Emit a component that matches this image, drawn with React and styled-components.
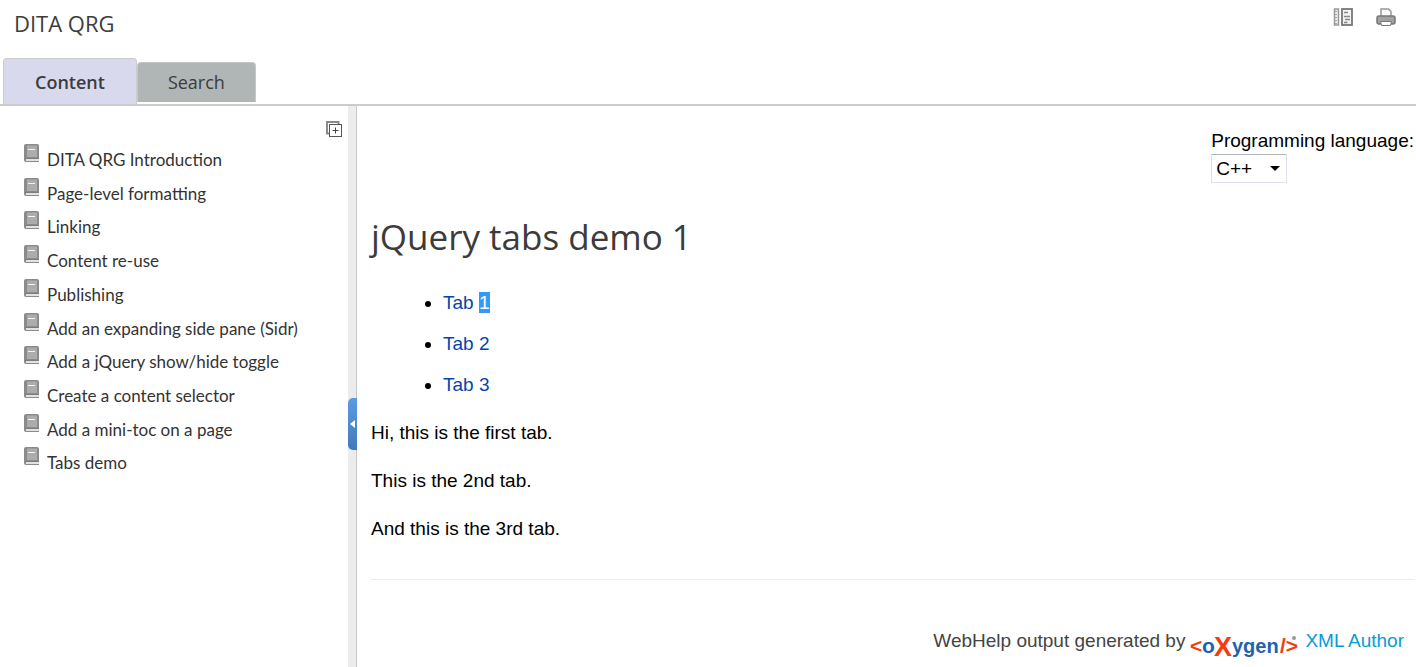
import { useState } from "react";
import styled, { createGlobalStyle, css } from "styled-components";

const topics = [
  "DITA QRG Introduction",
  "Page-level formatting",
  "Linking",
  "Content re-use",
  "Publishing",
  "Add an expanding side pane (Sidr)",
  "Add a jQuery show/hide toggle",
  "Create a content selector",
  "Add a mini-toc on a page",
  "Tabs demo",
];

function BookIcon() {
  return (
    <svg width="16" height="18" viewBox="0 0 16 18" aria-hidden="true">
      <path d="M0 2Q0 0 2 0H13Q15 0 15 2V18H2Q0 18 0 16Z" fill="#8b8b8b" />
      <path d="M3 1.500H13V13H3Z" fill="#acacac" />
      <path d="M4 5.500H11" stroke="#f4f4f4" />
      <path d="M1 14.500H15" stroke="#7d7d7d" />
      <path d="M2 15.500H15M2 16.500H15" stroke="#e2e2e2" />
    </svg>
  );
}

function FramesIcon() {
  return (
    <svg width="20" height="19" viewBox="0 0 20 19" aria-hidden="true">
      <rect x="1.500" y="1" width="4" height="16" fill="#eee" stroke="#999" strokeWidth="1.500" />
      <path d="M3 3V16" stroke="#aaa" strokeWidth="2" strokeDasharray="1 2" />
      <rect x="9" y="1" width="10" height="16" fill="#f4f4f4" stroke="#777" strokeWidth="1.800" />
      <path d="M11 4.500H15M11 8.500H17M12 11.500H17M11 14.500H14.500" stroke="#888" strokeWidth="1.500" />
    </svg>
  );
}

function PrintIcon() {
  return (
    <svg width="20" height="19" viewBox="0 0 20 19" aria-hidden="true">
      <path d="M5 9V1H12.500L15 3.500V9" fill="#fafafa" stroke="#999" strokeWidth="1.500" />
      <rect x="1" y="8" width="18" height="8" rx="2" fill="#a2a2a2" stroke="#777" strokeWidth="1.500" />
      <path d="M4.500 13.500H15.500L14.500 17.500H5.500Z" fill="#fff" stroke="#777" />
    </svg>
  );
}

function ExpandIcon() {
  return (
    <svg width="16" height="16" viewBox="0 0 16 16" aria-hidden="true">
      <path d="M3 12.500H1V1H12.500V3" fill="none" stroke="#8a8a8a" strokeWidth="2" />
      <rect x="3.500" y="3.500" width="12" height="12" fill="#fff" stroke="#555" />
      <path d="M9.500 6.500V12.500M6.500 9.500H12.500" stroke="#444" />
    </svg>
  );
}

function OxygenLogo() {
  return (
    <LogoSvg width="110" height="30" viewBox="0 0 110 30" role="img" aria-label="oXygen">
      <text x="0" y="23" fill="#f63c0f" fontSize="21">&lt;</text>
      <text x="12" y="23" fill="#1c63b0" fontSize="21">o</text>
      <text x="24" y="26" fill="#f63c0f" fontSize="27">X</text>
      <text x="42" y="23" fill="#1c63b0" fontSize="20">ygen</text>
      <text x="90" y="23" fill="#f63c0f" fontSize="21">/&gt;</text>
      <circle cx="104" cy="8" r="2" fill="#999" />
    </LogoSvg>
  );
}

function App() {
  const [tab, setTab] = useState("Content");
  const [language, setLanguage] = useState("C++");

  return (
    <Page>
      <GlobalStyle />
      <Header>
        <TitleBar>
          <SiteTitle>DITA QRG</SiteTitle>
          <Tools>
            <IconButton aria-label="With frames">
              <FramesIcon />
            </IconButton>
            <IconButton aria-label="Print">
              <PrintIcon />
            </IconButton>
          </Tools>
        </TitleBar>
        <TabBar>
          {["Content", "Search"].map((name) => (
            <TabButton key={name} $active={tab === name} onClick={() => setTab(name)}>
              {name}
            </TabButton>
          ))}
        </TabBar>
      </Header>
      <Body>
        <Sidebar>
          <SidebarTools>
            <IconButton aria-label="Expand all">
              <ExpandIcon />
            </IconButton>
          </SidebarTools>
          <TopicList>
            {topics.map((topic) => (
              <Topic key={topic}>
                <BookIcon />
                <TopicLink href="#">{topic}</TopicLink>
              </Topic>
            ))}
          </TopicList>
        </Sidebar>
        <Splitter>
          <Handle aria-label="Collapse side pane">
            <svg width="5" height="8" viewBox="0 0 5 8" aria-hidden="true">
              <path d="M5 0V8L0 4Z" fill="#fff" />
            </svg>
          </Handle>
        </Splitter>
        <Main>
          <LanguagePicker>
            <label htmlFor="language">Programming language:</label>
            <SelectBox>
              <Select
                id="language"
                value={language}
                onChange={(e) => setLanguage(e.target.value)}
              >
                <option>C++</option>
                <option>Java</option>
              </Select>
              <Arrow width="10" height="5" viewBox="0 0 10 5" aria-hidden="true">
                <path d="M0 0H10L5 5Z" fill="#000" />
              </Arrow>
            </SelectBox>
          </LanguagePicker>
          <Heading>jQuery tabs demo 1</Heading>
          <TabLinks>
            <li>
              <a href="#tab1">
                Tab <Selected>1</Selected>
              </a>
            </li>
            <li>
              <a href="#tab2">Tab 2</a>
            </li>
            <li>
              <a href="#tab3">Tab 3</a>
            </li>
          </TabLinks>
          <Paragraph id="tab1">Hi, this is the first tab.</Paragraph>
          <Paragraph id="tab2">This is the 2nd tab.</Paragraph>
          <Paragraph id="tab3">And this is the 3rd tab.</Paragraph>
          <Footer>
            <span>WebHelp output generated by</span>
            <FooterLink href="#">
              <OxygenLogo />
              XML Author
            </FooterLink>
          </Footer>
        </Main>
      </Body>
    </Page>
  );
}

const GlobalStyle = createGlobalStyle`
  * {
    box-sizing: border-box;
  }
  body {
    margin: 0;
    background: #fff;
    color: #000;
    font: 19px/22px "Liberation Sans", Arial, sans-serif;
  }
  button, select {
    font: inherit;
    color: inherit;
  }
  a {
    text-decoration: none;
  }
`;

const Page = styled.div`
  min-height: 100vh;
  display: flex;
  flex-direction: column;
`;

const Header = styled.header`
  border-bottom: 2px solid #ccc;
`;

const TitleBar = styled.div`
  display: flex;
  justify-content: space-between;
  align-items: flex-start;
  height: 58px;
  padding: 8px 20px 0 14px;
`;

const SiteTitle = styled.div`
  font: 22px/30px "Open Sans", "Trebuchet MS", sans-serif;
  color: #3c3c3c;
`;

const Tools = styled.div`
  display: flex;
  gap: 23px;
`;

const IconButton = styled.button`
  display: flex;
  padding: 0;
  border: 0;
  background: none;
  cursor: pointer;
`;

const TabBar = styled.div`
  display: flex;
  align-items: flex-start;
  height: 46px;
  padding-left: 3px;
`;

const TabButton = styled.button`
  height: 40px;
  margin-top: 4px;
  padding: 0 30px 2px;
  border: 1px solid #c4c8c8;
  border-bottom: 0;
  border-radius: 4px 4px 0 0;
  background: #b0b5b5;
  color: #3c3c3c;
  font-family: "Open Sans", "Trebuchet MS", sans-serif;
  font-size: 18px;
  cursor: pointer;

  ${({ $active }) =>
    $active &&
    css`
      height: 46px;
      margin-top: 0;
      padding: 0 31px;
      border-color: #ccc;
      background: #d9d9ed;
      font-weight: 600;
    `}
`;

const Body = styled.div`
  flex: 1;
  display: flex;
`;

const Sidebar = styled.nav`
  flex: 0 0 348px;
  padding: 15px 6px 0 24px;
`;

const SidebarTools = styled.div`
  display: flex;
  justify-content: flex-end;
`;

const TopicList = styled.ul`
  display: grid;
  grid-auto-rows: 1fr;
  min-height: 337px;
  margin: 7px 0 0;
  padding: 0;
  list-style: none;
`;

const Topic = styled.li`
  display: flex;
  align-items: flex-start;
  gap: 7px;
`;

const TopicLink = styled.a`
  padding-top: 5px;
  color: #333;
  font: 17px/22px Lato, Calibri, sans-serif;
`;

const Splitter = styled.div`
  position: relative;
  flex: 0 0 9px;
  border-right: 1px solid #c8c8c8;
  background: #ececec;
`;

const Handle = styled.button`
  position: absolute;
  top: 52%;
  left: 0;
  display: flex;
  align-items: center;
  justify-content: center;
  width: 9px;
  height: 52px;
  padding: 0;
  border: 0;
  border-radius: 5px 0 0 5px;
  background: linear-gradient(#5a9be6, #437ab8);
  cursor: pointer;
`;

const Main = styled.main`
  flex: 1;
  display: flex;
  flex-direction: column;
  padding: 21px 2px 0 14px;
`;

const LanguagePicker = styled.div`
  align-self: flex-end;
  display: flex;
  flex-direction: column;
  align-items: flex-start;
  line-height: 27px;
`;

const SelectBox = styled.div`
  position: relative;
`;

const Select = styled.select`
  appearance: none;
  display: block;
  width: 76px;
  height: 29px;
  padding: 0 4px;
  border: 1px solid #dfe2ea;
  border-top-color: #b4b6bd;
  border-radius: 0;
  background: #fff;
`;

const Arrow = styled.svg`
  position: absolute;
  top: 12px;
  right: 7px;
  pointer-events: none;
`;

const Heading = styled.h1`
  margin: 32px 0 33px;
  color: #3c3c3c;
  font: 35px/44px "Open Sans", "Trebuchet MS", sans-serif;
`;

const TabLinks = styled.ul`
  display: flex;
  flex-direction: column;
  gap: 19px;
  margin: 0;
  padding-left: 72px;

  a {
    color: #0645ad;
  }
`;

const Selected = styled.mark`
  background: #3399ff;
  color: #fff;
`;

const Paragraph = styled.p`
  margin: 26px 0 0;
`;

const Footer = styled.footer`
  display: flex;
  justify-content: flex-end;
  align-items: center;
  gap: 5px;
  margin-top: 39px;
  padding: 42px 10px 0 0;
  border-top: 1px solid #ececec;
  color: #444;
`;

const FooterLink = styled.a`
  display: flex;
  align-items: center;
  gap: 5px;
  color: #0a9bd0;
`;

const LogoSvg = styled.svg`
  margin-top: 8px;
  overflow: visible;
  font-family: "Liberation Sans", Arial, sans-serif;
  font-weight: 700;
`;

export default App;
